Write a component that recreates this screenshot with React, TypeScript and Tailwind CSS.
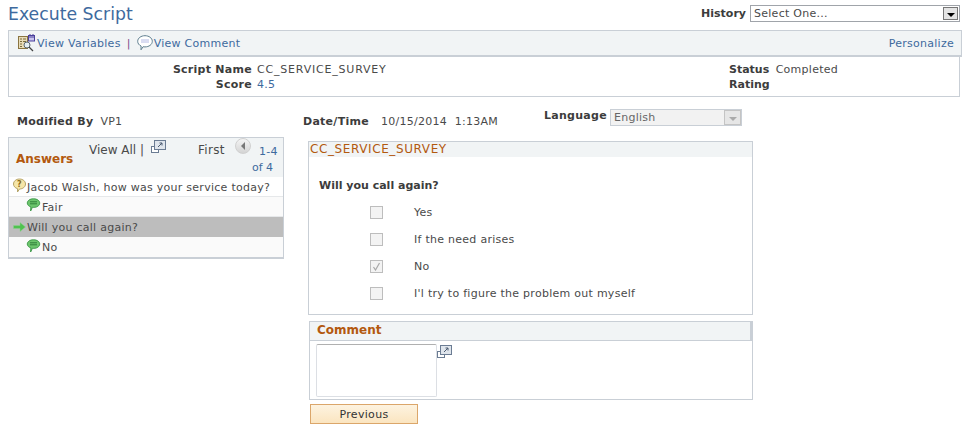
import React from 'react';

const PopupIcon = () => (
    <svg width="16" height="14" viewBox="0 0 16 14" className="block">
        <rect x="0.5" y="6.5" width="7" height="6" fill="#fff" stroke="#6b7c93" />
        <rect x="3.5" y="0.5" width="11" height="9" fill="#dfe5ec" stroke="#6b7c93" />
        <path d="M7 7 L11 3 M8.5 3 H11 V5.5" fill="none" stroke="#4a5a70" strokeWidth="1" />
    </svg>
);

const VariablesIcon = () => (
    <svg width="18" height="18" viewBox="0 0 18 18" className="block">
        <rect x="0.5" y="2.5" width="9" height="12" fill="#e8dcb8" stroke="#8a7440" />
        <path d="M2 5h2M5 5h3M2 7.5h2M5 7.5h3M2 10h2M2 12.5h2" stroke="#7a6a3a" />
        <rect x="10.5" y="1.5" width="6" height="5.5" fill="#c8c4ee" stroke="#4a3f9a" />
        <path d="M12 0v2M15 0v2M11 3h5" stroke="#4a3f9a" />
        <circle cx="9" cy="11" r="3" fill="#e4eef4" stroke="#5a6670" />
        <path d="M11 13l4 4" stroke="#444" strokeWidth="1.2" />
    </svg>
);

const CommentIcon = () => (
    <svg width="16" height="16" viewBox="0 0 16 16" className="block">
        <path d="M8 0.7c4 0 7.3 2.4 7.3 5.6S12 11.9 8 11.9c-.7 0-1.3 0-1.900-.2L4 14.8l.1-3.8C2 10.100.7 8.400.7 6.300.7 3.100 4 .7 8 .7z" fill="#fff" stroke="#5f7f8f" />
        <path d="M4.500 5h7M4.500 7h7" stroke="#6a75c8" strokeDasharray="1 1" />
    </svg>
);

const QuestionIcon = () => (
    <svg width="15" height="15" viewBox="0 0 15 15" className="block">
        <path d="M7.500 1c3.400 0 6 2.200 6 5s-2.600 5-6 5l-2 3 .1-3.300C3.100 10 1.500 8.200 1.500 6c0-2.800 2.600-5 6-5z" fill="#f6e6a8" stroke="#b5a468" />
        <text x="7.500" y="9" fontSize="8" fontWeight="700" textAnchor="middle" fill="#8a6d1c" fontFamily="'DejaVu Sans', sans-serif">?</text>
    </svg>
);

const AnswerIcon = () => (
    <svg width="15" height="14" viewBox="0 0 15 14" className="block">
        <path d="M7.500 0.800c3.500 0 6.200 1.800 6.200 4.300S11 9.400 7.500 9.400c-.4 0-.8 0-1.100-.1L4.600 13l.3-4.100C2.800 8.300 1.300 6.900 1.300 5.100 1.300 2.600 4 .8 7.500.8z" fill="#6cc56c" stroke="#3f9a4a" />
        <path d="M4 3.800h7M4 5.800h7" stroke="#2f7f3a" />
    </svg>
);

const ArrowIcon = () => (
    <svg width="13" height="10" viewBox="0 0 13 10" className="block">
        <path d="M0.500 3.500H7V0.500L12.500 5 7 9.500v-3H.5z" fill="#4fc24f" stroke="#8fd08f" strokeWidth="0.500" />
    </svg>
);

const answerRows = [
    { icon: <QuestionIcon />, text: 'Jacob Walsh, how was your service today?', cls: 'bg-white pl-[3px] border-b border-[#e6e8ea]', iconCls: '-mt-[3px]' },
    { icon: <AnswerIcon />, text: 'Fair', cls: 'bg-[#fafafa] pl-[17px] gap-[1px] border-b border-[#e6e8ea]', iconCls: '-mt-[3px]' },
    { icon: <ArrowIcon />, text: 'Will you call again?', cls: 'bg-[#bdbdbd] pl-[4px] gap-[1px] border-b border-[#bdbdbd]', iconCls: 'mt-[1px]' },
    { icon: <AnswerIcon />, text: 'No', cls: 'bg-[#fafafa] pl-[17px] gap-[1px]', iconCls: '-mt-[3px]' },
];

const options = [
    { label: 'Yes', checked: false },
    { label: 'If the need arises', checked: false },
    { label: 'No', checked: true },
    { label: "I'l try to figure the problem out myself", checked: false },
];

export default function App() {
    return (
        <div className="w-[968px] h-[430px] overflow-hidden bg-white text-[11px] leading-[14px] tracking-[0.27px] text-[#4a4a4a] font-['DejaVu_Sans',Verdana,sans-serif]">
            {/* Title row */}
            <div className="flex justify-between h-[30px] pl-2 pr-[8px]">
                <div className="text-[17.300px] leading-[20px] tracking-normal pt-[4px] text-[#3e6a9e]">Execute Script</div>
                <div className="flex items-start pt-[5px]">
                    <span className="font-bold tracking-normal mt-[2px] mr-[4px] text-[#3c3c3c]">History</span>
                    <div className="w-[210px] h-[17px] border border-[#a0a4aa] flex justify-between items-center pl-[3px] pr-[1px]">
                        <span>Select One...</span>
                        <span className="w-[15px] h-[13px] bg-[#e4e4e4] border border-[#777] flex items-center justify-center">
                            <span className="w-0 h-0 border-x-[4px] border-x-transparent border-t-[4px] border-t-black mt-[2px]" />
                        </span>
                    </div>
                </div>
            </div>

            {/* Toolbar */}
            <div className="flex justify-between items-center ml-2 mr-[6px] h-[27px] bg-[#f1f4f5] border border-[#c9cfd6] border-b-2 pl-[9px] pr-[7px] text-[#3e6a9e]">
                <div className="flex items-center">
                    <VariablesIcon />
                    <span className="ml-[1px] pt-[1px]">View Variables</span>
                    <span className="ml-[6px] mr-[6px] pt-[1px] text-[#7a4a8a]">|</span>
                    <CommentIcon />
                    <span className="ml-[1px] pt-[1px]">View Comment</span>
                </div>
                <span className="pt-[1px]">Personalize</span>
            </div>

            {/* Script summary */}
            <div className="ml-2 mr-[8px] h-[40px] border border-t-0 border-[#c9cfd6] flex pt-[5px]">
                <div className="w-[243px] text-right font-bold text-[#3c3c3c] leading-[15px]">
                    <div>Script Name</div>
                    <div>Score</div>
                </div>
                <div className="ml-[5px] w-[472px] leading-[15px]">
                    <div className="tracking-[0.8px]">CC_SERVICE_SURVEY</div>
                    <div className="text-[#3e6a9e]">4.5</div>
                </div>
                <div className="font-bold tracking-normal text-[#3c3c3c] leading-[15px]">
                    <div>Status</div>
                    <div>Rating</div>
                </div>
                <div className="ml-[6px] leading-[15px]">Completed</div>
            </div>

            <div className="flex">
                {/* Left column */}
                <div className="w-[295px] shrink-0 pl-2">
                    <div className="h-[40px] pt-[18px] pl-[9px] flex">
                        <span className="font-bold text-[#3c3c3c]">Modified By</span>
                        <span className="ml-[7px]">VP1</span>
                    </div>
                    <div className="w-[276px] border border-[#c9cfd6] border-b-2 bg-white">
                        <div className="h-[39px] bg-[#f1f4f5] flex relative tracking-normal">
                            <span className="font-bold text-[12px] text-[#b3590f] absolute left-[7px] top-[14px]">Answers</span>
                            <span className="absolute left-[80px] top-[5px] text-[12px]">View All |</span>
                            <span className="absolute left-[142px] top-[2px]"><PopupIcon /></span>
                            <span className="absolute left-[189px] top-[5px] text-[12px] tracking-[0.3px]">First</span>
                            <span className="absolute left-[226px] top-0 w-[16px] h-[16px] rounded-full bg-gradient-to-b from-[#f4f4f4] to-[#d4d4d4] border border-[#d0d0d0] flex items-center justify-center">
                                <span className="w-0 h-0 border-y-[4px] border-y-transparent border-r-[4px] border-r-[#777]" />
                            </span>
                            <span className="absolute left-[250px] top-[7px] tracking-[0.3px] text-[#3e6a9e]">1-4</span>
                            <span className="absolute left-[243px] top-[23px] text-[#3e6a9e]">of 4</span>
                        </div>
                        {answerRows.map((row) => (
                            <div key={row.text} className={`h-[20px] flex items-center ${row.cls}`}>
                                <span className={`shrink-0 ${row.iconCls}`}>{row.icon}</span>
                                <span className="whitespace-nowrap pt-[2px]">{row.text}</span>
                            </div>
                        ))}
                    </div>
                </div>

                {/* Right column */}
                <div className="w-[458px] shrink-0">
                    <div className="h-[44px] relative">
                        <span className="absolute left-[8px] top-[18px] font-bold text-[#3c3c3c]">Date/Time</span>
                        <span className="absolute left-[86px] top-[18px] tracking-[0.27px] whitespace-pre">10/15/2014  1:13AM</span>
                        <span className="absolute left-[249px] top-[12px] font-bold text-[#3c3c3c]">Language</span>
                        <div className="absolute left-[315px] top-[12px] w-[132px] h-[17px] bg-[#f2f2f2] border border-[#c9cfd6] flex justify-between items-center pl-[3px] text-[#666]">
                            <span>English</span>
                            <span className="w-[17px] h-[15px] bg-[#e6e6e6] border border-[#c4c4c4] flex items-center justify-center">
                                <span className="w-0 h-0 border-x-[4px] border-x-transparent border-t-[4px] border-t-[#aaa] mt-[2px]" />
                            </span>
                        </div>
                    </div>

                    {/* Survey panel */}
                    <div className="ml-[13px] w-[445px] h-[174px] border border-[#c9cfd6] bg-white">
                        <div className="h-[15px] bg-[#f1f4f5] pl-[1px] text-[12px] tracking-[0.6px] leading-[15px] text-[#b3590f]">CC_SERVICE_SURVEY</div>
                        <div className="font-bold tracking-normal pl-[10px] pt-[22px] text-[#3c3c3c]">Will you call again?</div>
                        <div className="flex flex-col gap-[13px] pt-[12px] pl-[61px]">
                            {options.map((opt) => (
                                <div key={opt.label} className="flex items-center h-[14px]">
                                    <span className="w-[13px] h-[13px] bg-[#f3f3f3] border border-[#bdbdbd] flex items-center justify-center">
                                        {opt.checked && (
                                            <svg width="9" height="9" viewBox="0 0 9 9">
                                                <path d="M1.500 5l2 3 4-7" fill="none" stroke="#a8a8a8" strokeWidth="1.200" />
                                            </svg>
                                        )}
                                    </span>
                                    <span className="ml-[31px] pt-[2px]">{opt.label}</span>
                                </div>
                            ))}
                        </div>
                    </div>

                    {/* Comment */}
                    <div className="ml-[14px] mt-[6px] w-[444px] h-[79px] border border-[#c9cfd6] bg-white">
                        <div className="h-[19px] bg-[#f1f4f5] border-b border-r-2 border-[#c9cfd6] pl-[7px] font-bold text-[12px] tracking-normal leading-[17px] text-[#b3590f]">Comment</div>
                        <div className="flex pl-[6px] pt-[3px]">
                            <div className="w-[121px] h-[53px] border border-[#dcdfe4] border-t-[#b0b0b0] rounded-[2px] bg-white" />
                            <span className="pt-[1px]"><PopupIcon /></span>
                        </div>
                    </div>

                    <button className="ml-[15px] mt-[4px] block w-[108px] h-[20px] border border-[#dba66a] bg-gradient-to-b from-[#fdf3e0] to-[#fbe5c0] text-center text-[11px] tracking-[0.300px] leading-[19px] text-[#333]">
                        Previous
                    </button>
                </div>
            </div>
        </div>
    );
}
